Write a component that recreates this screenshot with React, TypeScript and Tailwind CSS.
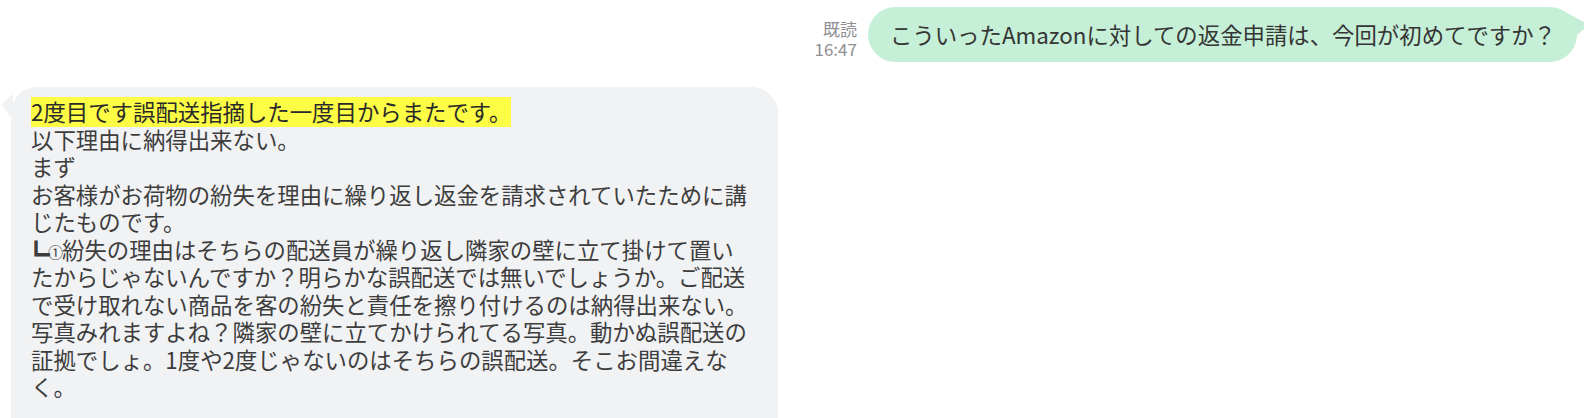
const font = { fontFamily: '"Noto Sans CJK JP", "Noto Sans", sans-serif' }

function SentBubble({ text }: { text: string }) {
  return (
    <div className="relative rounded-full bg-[#c5efd6] pl-[22px] pr-[21px] py-[14px] text-[22.4px] leading-[27px] text-[#353535]">
      {text}
      <svg className="absolute right-[-12px] top-[6px]" width="22" height="24" viewBox="0 0 22 24">
        <path d="M0 0 Q12 6 22 12 Q14 18 8 24 Z" fill="#c5efd6" />
      </svg>
    </div>
  )
}

function ReceivedBubble() {
  return (
    <div className="relative w-[767px] rounded-t-[26px] bg-[#f1f2f4] pl-[20px] pr-[22px] pt-[11px] pb-[40px] text-[22.4px] leading-[27.5px] text-[#3d3d3d]">
      <svg className="absolute left-[-10px] top-[7px]" width="12" height="26" viewBox="0 0 12 26">
        <path d="M12 0 Q5 6 0 11 Q6 18 12 26 Z" fill="#f1f2f4" />
      </svg>
      <div>
        <span className="inline-block bg-[#fdfd45] text-[#2a2a2a] py-[1px] -my-[1px]">
          2度目です誤配送指摘した一度目からまたです。
        </span>
      </div>
      <div>以下理由に納得出来ない。</div>
      <div>まず</div>
      <div>お客様がお荷物の紛失を理由に繰り返し返金を請求されていたために講じたものです。</div>
      <div>
        <span className="inline-block w-[17px] h-[27.5px] align-top">
          <span className="inline-block -ml-[9px] text-[28px] leading-[27.5px] font-bold translate-y-[5px]">┗</span>
        </span>
        <span className="inline-block w-[14px] h-[27.5px] align-top text-[15px] leading-[27.5px] translate-y-[2px]">①</span>
        紛失の理由はそちらの配送員が繰り返し隣家の壁に立て掛けて置いたからじゃないんですか？明らかな誤配送では無いでしょうか。ご配送で受け取れない商品を客の紛失と責任を擦り付けるのは納得出来ない。写真みれますよね？隣家の壁に立てかけられてる写真。動かぬ誤配送の証拠でしょ。1度や2度じゃないのはそちらの誤配送。そこお間違えなく。
      </div>
    </div>
  )
}

export default function App() {
  return (
    <div className="w-[1584px] h-[418px] overflow-hidden bg-white" style={font}>
      <div className="flex flex-col pt-[7px]">
        <div className="flex justify-end items-end gap-[11px] pr-[7px]">
          <div className="flex flex-col items-end pb-[3px] text-[17px] leading-[20px] text-[#8e8e93]">
            <span>既読</span>
            <span>16:47</span>
          </div>
          <SentBubble text="こういったAmazonに対しての返金申請は、今回が初めてですか？" />
        </div>
        <div className="flex pl-[11px] mt-[25px]">
          <ReceivedBubble />
        </div>
      </div>
    </div>
  )
}
